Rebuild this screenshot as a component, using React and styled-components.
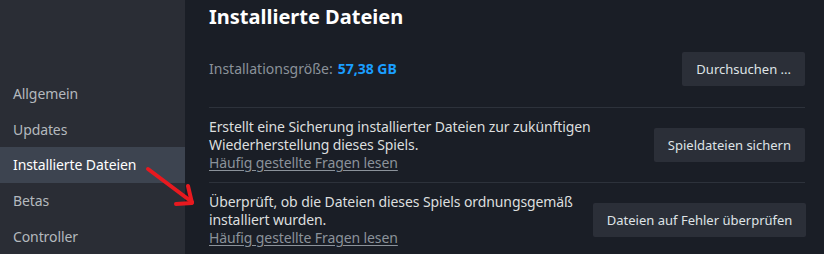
import React from "react";
import styled, { createGlobalStyle } from "styled-components";

const Global = createGlobalStyle`
  html, body { margin: 0; padding: 0; background: #1a1e26; }
  body { font-family: "Noto Sans", "Open Sans", Arial, sans-serif; }
  * { box-sizing: border-box; }
`;

const Page = styled.div`
  position: relative;
  display: flex;
  width: 824px;
  height: 254px;
  overflow: hidden;
  background: #1a1e26;
`;

const Sidebar = styled.nav`
  width: 185px;
  flex: none;
  background: #2a2d35;
  display: flex;
  flex-direction: column;
  padding-top: 76px;
`;

const NavItem = styled.div`
  height: 36px;
  display: flex;
  align-items: center;
  padding-left: 13px;
  font-size: 14px;
  letter-spacing: -0.1px;
  color: ${(p) => (p.$active ? "#ffffff" : "#b4b9be")};
  background: ${(p) => (p.$active ? "#3d4450" : "transparent")};
`;

const Main = styled.main`
  flex: 1;
  padding: 0 19px 0 24px;
  display: flex;
  flex-direction: column;
`;

const Title = styled.h1`
  margin: 0;
  padding-top: 4px;
  font-size: 20px;
  line-height: 26px;
  font-weight: 700;
  color: #ffffff;
`;

const Row = styled.div`
  display: flex;
  align-items: center;
  justify-content: space-between;
  gap: 20px;
  padding: ${(p) => p.$pad || "10px"} 0;
  border-bottom: 1px solid ${(p) => (p.$last ? "transparent" : "#2d323b")};
  flex: none;
`;

const SizeLabel = styled.div`
  font-size: 14px;
  color: #8b929a;
`;

const SizeValue = styled.span`
  color: #1a9fff;
  font-weight: 700;
  margin-left: 5px;
`;

const Desc = styled.div`
  font-size: 14px;
  line-height: 18px;
  color: #dcdedf;
  white-space: nowrap;
  letter-spacing: -0.1px;
`;

const Link = styled.a`
  display: block;
  color: #8b929a;
  text-decoration: underline;
  text-underline-offset: 2px;
`;

const Button = styled.button`
  flex: none;
  height: 34px;
  padding: 0 14px;
  border: none;
  border-radius: 2px;
  background: #2b2f38;
  color: #dfe3e6;
  font-family: inherit;
  font-size: 13px;
`;

const Arrow = styled.svg`
  position: absolute;
  left: 140px;
  top: 160px;
  width: 60px;
  height: 52px;
  pointer-events: none;
`;

export default function App() {
  return (
    <Page>
      <Global />
      <Sidebar>
        <NavItem>Allgemein</NavItem>
        <NavItem>Updates</NavItem>
        <NavItem $active>Installierte Dateien</NavItem>
        <NavItem>Betas</NavItem>
        <NavItem>Controller</NavItem>
      </Sidebar>
      <Main>
        <Title>Installierte Dateien</Title>
        <Row $pad="21.5px">
          <SizeLabel>
            Installationsgröße:<SizeValue>57,38 GB</SizeValue>
          </SizeLabel>
          <Button>Durchsuchen ...</Button>
        </Row>
        <Row>
          <Desc>
            Erstellt eine Sicherung installierter Dateien zur zukünftigen
            <br />
            Wiederherstellung dieses Spiels.
            <Link>Häufig gestellte Fragen lesen</Link>
          </Desc>
          <Button>Spieldateien sichern</Button>
        </Row>
        <Row $last>
          <Desc>
            Überprüft, ob die Dateien dieses Spiels ordnungsgemäß
            <br />
            installiert wurden.
            <Link>Häufig gestellte Fragen lesen</Link>
          </Desc>
          <Button>Dateien auf Fehler überprüfen</Button>
        </Row>
      </Main>
      <Arrow viewBox="0 0 60 52">
        <g stroke="#e8191f" strokeWidth="4" strokeLinecap="round" strokeLinejoin="round" fill="none">
          <path d="M8 9 L52 42" />
          <path d="M48 26 L52 43 L36 44" />
        </g>
      </Arrow>
    </Page>
  );
}
